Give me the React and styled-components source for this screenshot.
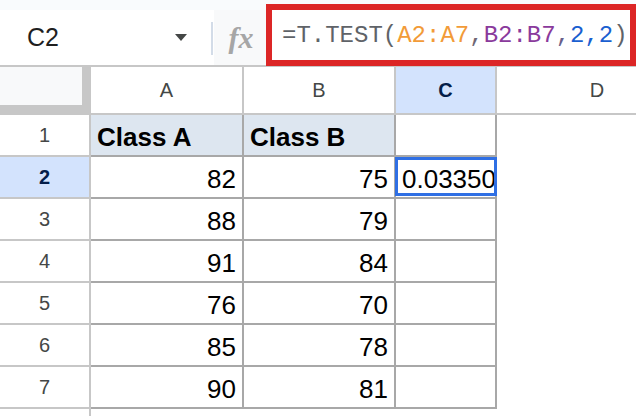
import React from "react";
import styled, { createGlobalStyle } from "styled-components";

const GlobalStyle = createGlobalStyle`
    html, body {
        margin: 0;
        padding: 0;
        background: #fff;
        overflow: hidden;
        font-family: "Liberation Sans", Arial, sans-serif;
    }
`;

const columns = ["A", "B", "C", "D"];
const rows = [
    ["Class A", "Class B"],
    [82, 75],
    [88, 79],
    [91, 84],
    [76, 70],
    [85, 78],
    [90, 81],
];

function App() {
    return (
        <>
            <GlobalStyle />
            <Page>
                <Toolbar>
                    <NameBox>
                        <NameText>C2</NameText>
                        <DropArrow />
                        <Divider />
                    </NameBox>
                    <FxArea>
                        <FxLabel>fx</FxLabel>
                    </FxArea>
                    <FormulaBox>
                        <Token $color="#5f6368">=T.TEST(</Token>
                        <Token $color="#f29b38">A2:A7</Token>
                        <Token $color="#6f6774">,</Token>
                        <Token $color="#8a3a9c">B2:B7</Token>
                        <Token $color="#6a5f8a">,</Token>
                        <Token $color="#1a5fd0">2,2</Token>
                        <Token $color="#5f6368">)</Token>
                    </FormulaBox>
                </Toolbar>
                <Sheet>
                    <Corner />
                    {columns.map((c) => (
                        <ColHeader key={c} $selected={c === "C"}>
                            {c}
                        </ColHeader>
                    ))}
                    {rows.map((row, i) => (
                        <React.Fragment key={i}>
                            <RowHeader $selected={i === 1}>{i + 1}</RowHeader>
                            {row.map((value, j) => (
                                <Cell
                                    key={j}
                                    $bordered
                                    $title={i === 0}
                                    $align={typeof value === "number" ? "flex-end" : "flex-start"}
                                >
                                    {value}
                                </Cell>
                            ))}
                            <Cell $bordered $clip={i === 1}>
                                {i === 1 && (
                                    <>
                                        <CellText>0.03350</CellText>
                                        <Selection />
                                    </>
                                )}
                            </Cell>
                            <Cell />
                        </React.Fragment>
                    ))}
                    <RowHeader $open />
                </Sheet>
            </Page>
        </>
    );
}

const Page = styled.div`
    width: 636px;
    height: 416px;
    overflow: hidden;
`;
const Toolbar = styled.div`
    display: flex;
    align-items: flex-end;
    box-sizing: border-box;
    height: 67px;
    padding-top: 4px;
    background: #f9fbfd;
    border-bottom: 2px solid #c7c7c7;
`;
const NameBox = styled.div`
    position: relative;
    display: flex;
    align-items: center;
    width: 214px;
    height: 55px;
    padding-left: 27px;
    box-sizing: border-box;
    background: #fff;
`;
const NameText = styled.span`
    font-size: 25px;
    color: #1f1f1f;
    flex: 1;
`;
const DropArrow = styled.span`
    width: 0;
    height: 0;
    margin-right: 27px;
    border-left: 6px solid transparent;
    border-right: 6px solid transparent;
    border-top: 7px solid #444746;
`;
const Divider = styled.span`
    position: absolute;
    right: 1px;
    top: 12px;
    width: 2px;
    height: 33px;
    background: #d3dce8;
`;
const FxArea = styled.div`
    display: flex;
    align-items: center;
    justify-content: center;
    width: 52px;
    height: 55px;
    background: #f8f9fa;
`;
const FxLabel = styled.span`
    font-family: "Liberation Serif", "Times New Roman", serif;
    font-style: italic;
    font-weight: bold;
    font-size: 30px;
    color: #a6a6a6;
    margin-left: 2px;
`;
const FormulaBox = styled.div`
    flex: 1;
    display: flex;
    align-items: center;
    box-sizing: border-box;
    height: 62px;
    margin-bottom: -1px;
    padding-left: 10px;
    border: 6px solid #dc2626;
    background: #fff;
    font-family: "Liberation Mono", "DejaVu Sans Mono", monospace;
    font-size: 24px;
    white-space: pre;
`;
const Token = styled.span`
    color: ${(p) => p.$color};
`;
const Sheet = styled.div`
    display: grid;
    grid-template-columns: 91px 153px 152px 101px 202px;
    grid-template-rows: 48px repeat(7, 42px) 20px;
`;
const Corner = styled.div`
    box-sizing: border-box;
    background: #f8f9fa;
    border-right: 9px solid #c7c7c7;
    border-bottom: 10px solid #c7c7c7;
`;
const ColHeader = styled.div`
    display: flex;
    align-items: center;
    justify-content: center;
    box-sizing: border-box;
    border-right: 2px solid #c7c7c7;
    border-bottom: 2px solid #c7c7c7;
    background: ${(p) => (p.$selected ? "#d3e3fd" : "#fff")};
    color: ${(p) => (p.$selected ? "#041e49" : "#444746")};
    font-weight: ${(p) => (p.$selected ? "bold" : "normal")};
    font-size: 20px;
`;
const RowHeader = styled.div`
    display: flex;
    align-items: center;
    justify-content: center;
    box-sizing: border-box;
    border-right: 2px solid #c7c7c7;
    border-bottom: ${(p) => (p.$open ? "none" : "2px solid #c7c7c7")};
    background: ${(p) => (p.$selected ? "#d3e3fd" : "#fff")};
    color: ${(p) => (p.$selected ? "#041e49" : "#444746")};
    font-weight: ${(p) => (p.$selected ? "bold" : "normal")};
    font-size: 20px;
`;
const Cell = styled.div`
    position: relative;
    display: flex;
    align-items: flex-end;
    justify-content: ${(p) => p.$align || "flex-start"};
    box-sizing: border-box;
    padding: 0 ${(p) => (p.$clip ? "1px" : "6px")} 3px 6px;
    border-right: ${(p) => (p.$bordered ? "2px solid #a8a8a8" : "none")};
    border-bottom: ${(p) => (p.$bordered ? "2px solid #a8a8a8" : "none")};
    background: ${(p) => (p.$title ? "#dde6f0" : "#fff")};
    font-weight: ${(p) => (p.$title ? "bold" : "normal")};
    font-size: 26px;
    line-height: 30px;
    color: #000;
    white-space: nowrap;
`;
const CellText = styled.span`
    display: block;
    min-width: 0;
    overflow: hidden;
`;
const Selection = styled.span`
    position: absolute;
    top: 0;
    left: -1px;
    right: -2px;
    bottom: 1px;
    border: 3px solid #2f6fe4;
`;

export default App;
